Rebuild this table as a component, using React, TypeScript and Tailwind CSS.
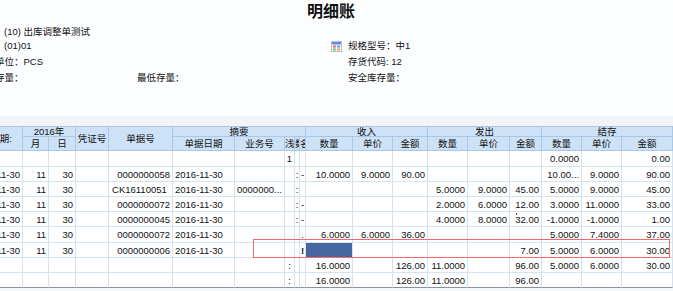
import React from "react";

type Align = "l" | "r" | "c";

const widths = [60, 26, 27, 33, 64, 62, 50, 10, 5, 6, 47, 40, 35, 40, 42, 32, 40, 40, 51];
const aligns: Align[] = ["r", "r", "r", "c", "r", "l", "l", "c", "c", "c", "r", "r", "r", "r", "r", "r", "r", "r", "r"];

const d = "2016-11-30";
const rows: string[][] = [
  ["", "", "", "", "", "", "", "1", "", "", "", "", "", "", "", "", "0.0000", "", "0.00"],
  [d, "11", "30", "", "0000000058", d, "", "", ":", "-", "10.0000", "9.0000", "90.00", "", "", "", "10.00...", "9.0000", "90.00"],
  [d, "11", "30", "", "CK16110051", d, "0000000...", "", ":", "", "", "", "", "5.0000", "9.0000", "45.00", "5.0000", "9.0000", "45.00"],
  [d, "11", "30", "", "0000000072", d, "", "", ":", "-", "", "", "", "2.0000", "6.0000", "12.00", "3.0000", "11.0000", "33.00"],
  [d, "11", "30", "", "0000000045", d, "", "", ":", "-", "", "", "", "4.0000", "8.0000", "32.00", "-1.0000", "-1.0000", "1.00"],
  [d, "11", "30", "", "0000000072", d, "", "", "", ".", "6.0000", "6.0000", "36.00", "", "", "", "5.0000", "7.4000", "37.00"],
  [d, "11", "30", "", "0000000006", d, "", "", "", "!", "", "", "", "", "", "7.00", "5.0000", "6.0000", "30.00"],
  ["", "", "", "", "", "", "", ":", "", "", "16.0000", "", "126.00", "11.0000", "", "96.00", "5.0000", "6.0000", "30.00"],
  ["", "", "", "", "", "", "", ":", "", "", "16.0000", "", "126.00", "11.0000", "", "96.00", "", "", ""],
];
const rowH = ["h-[16px]", "h-[15px]", "h-[15px]", "h-[15px]", "h-[15px]", "h-[16px]", "h-[15px]", "h-[15px]", "h-[15px]"];

const alignCls = (a: Align) =>
  a === "r" ? "text-right pr-[2px]" : a === "l" ? "text-left pl-[2px]" : "text-center";

function GridIcon() {
  return (
    <svg width="11" height="11" viewBox="0 0 11 11" className="shrink-0">
      <rect x="0.5" y="0.5" width="10" height="10" fill="#f4f6f9" stroke="#b8c2cf" />
      <rect x="1" y="1" width="9" height="2.5" fill="#5d8fd3" />
      <rect x="2" y="4.5" width="3" height="2" fill="#e86c6c" />
      <rect x="6" y="4.5" width="3" height="2" fill="#6a9ee0" />
      <rect x="2" y="7.5" width="3" height="2" fill="#7cc47a" />
      <rect x="6" y="7.5" width="3" height="2" fill="#e8a94f" />
    </svg>
  );
}

const hd = "bg-[#cde2f7] border-r border-b border-[#a9c7e6] text-center align-middle font-normal p-0 overflow-hidden whitespace-nowrap";

export default function App() {
  return (
    <div className="w-[673px] h-[291px] overflow-hidden bg-[#fcfdff] text-[#111] text-[9.5px] leading-[16px] [font-family:'Liberation_Sans','Noto_Sans_CJK_SC',sans-serif]">
      <div className="h-[24px] pl-[307px] pt-[2px] text-[16px] leading-[20px] font-bold text-[#111]">明细账</div>

      <div className="h-[16px] pl-[4px]">(10) 出库调整单测试</div>
      <div className="flex h-[16px] mt-[-2px]">
        <div className="w-[331px] pl-[4px]">(01)01</div>
        <div className="flex items-center gap-[6px]">
          <GridIcon />
          <span>规格型号：中1</span>
        </div>
      </div>
      <div className="flex h-[16px]">
        <div className="w-[348px] ml-[-5px]">单位：PCS</div>
        <div className="pl-[5px]">存货代码: 12</div>
      </div>
      <div className="flex h-[16px]">
        <div className="w-[142px] ml-[-5px]">存量：</div>
        <div className="w-[211px]">最低存量：</div>
        <div>安全库存量：</div>
      </div>

      <div className="h-[30px]" />
      <div className="h-[10px] bg-[#f2f4f8]" />

      <div className="relative ml-[-37px] w-[710px]">
        <table className="table-fixed border-separate border-spacing-0 w-[710px] border-t border-[#a9c7e6]">
          <colgroup>
            {widths.map((w, i) => (
              <col key={i} style={{ width: w }} />
            ))}
          </colgroup>
          <thead>
            <tr className="h-[10px] leading-[9px]">
              <th rowSpan={2} className={`${hd} !text-right pr-[10px]`}>日期:</th>
              <th colSpan={2} className={hd}>2016年</th>
              <th rowSpan={2} className={hd}>凭证号</th>
              <th rowSpan={2} className={hd}>单据号</th>
              <th colSpan={5} className={hd}>摘要</th>
              <th colSpan={3} className={hd}>收入</th>
              <th colSpan={3} className={hd}>发出</th>
              <th colSpan={3} className={hd}>结存</th>
            </tr>
            <tr className="h-[13px] leading-[13px]">
              {["月", "日", "单据日期", "业务号", "浅", "数", "名", "数量", "单价", "金额", "数量", "单价", "金额", "数量", "单价", "金额"].map(
                (t, i) => (
                  <th key={i} className={`${hd} ${i >= 4 && i <= 6 ? "!text-left" : ""}`}>
                    {t}
                  </th>
                )
              )}
            </tr>
          </thead>
          <tbody>
            {rows.map((r, ri) => (
              <tr key={ri} className={`${rowH[ri]} leading-[13px]`}>
                {r.map((c, ci) => {
                  const left = ci === 4 && c.startsWith("CK");
                  const blue = ri === 6 && ci === 10;
                  const last = ri === rows.length - 1;
                  return (
                    <td
                      key={ci}
                      className={`p-0 overflow-hidden whitespace-nowrap border-r border-b ${
                        last ? "border-b-[#8e9298]" : "border-b-[#d4e2f1]"
                      } border-r-[#d4e2f1] ${left ? "text-left pl-[3px]" : alignCls(aligns[ci])} ${
                        blue ? "bg-[#46679f]" : "bg-white"
                      } ${ci === 9 && c === "!" ? "font-bold" : ""}`}
                    >
                      {c === "32.00" ? (
                        <span className="relative">
                          <span className="absolute left-[1px] top-[-1px] w-[1px] h-[2px] bg-[#e02020]" />
                          {c}
                        </span>
                      ) : (
                        c
                      )}
                    </td>
                  );
                })}
              </tr>
            ))}
          </tbody>
        </table>
        <div className="absolute left-[290px] top-[113px] w-[417px] h-[19px] shadow-[inset_0_0_0_1px_#f06a6a] pointer-events-none" />
      </div>
      <div className="h-[10px] bg-[#f5f6f9]" />
    </div>
  );
}
